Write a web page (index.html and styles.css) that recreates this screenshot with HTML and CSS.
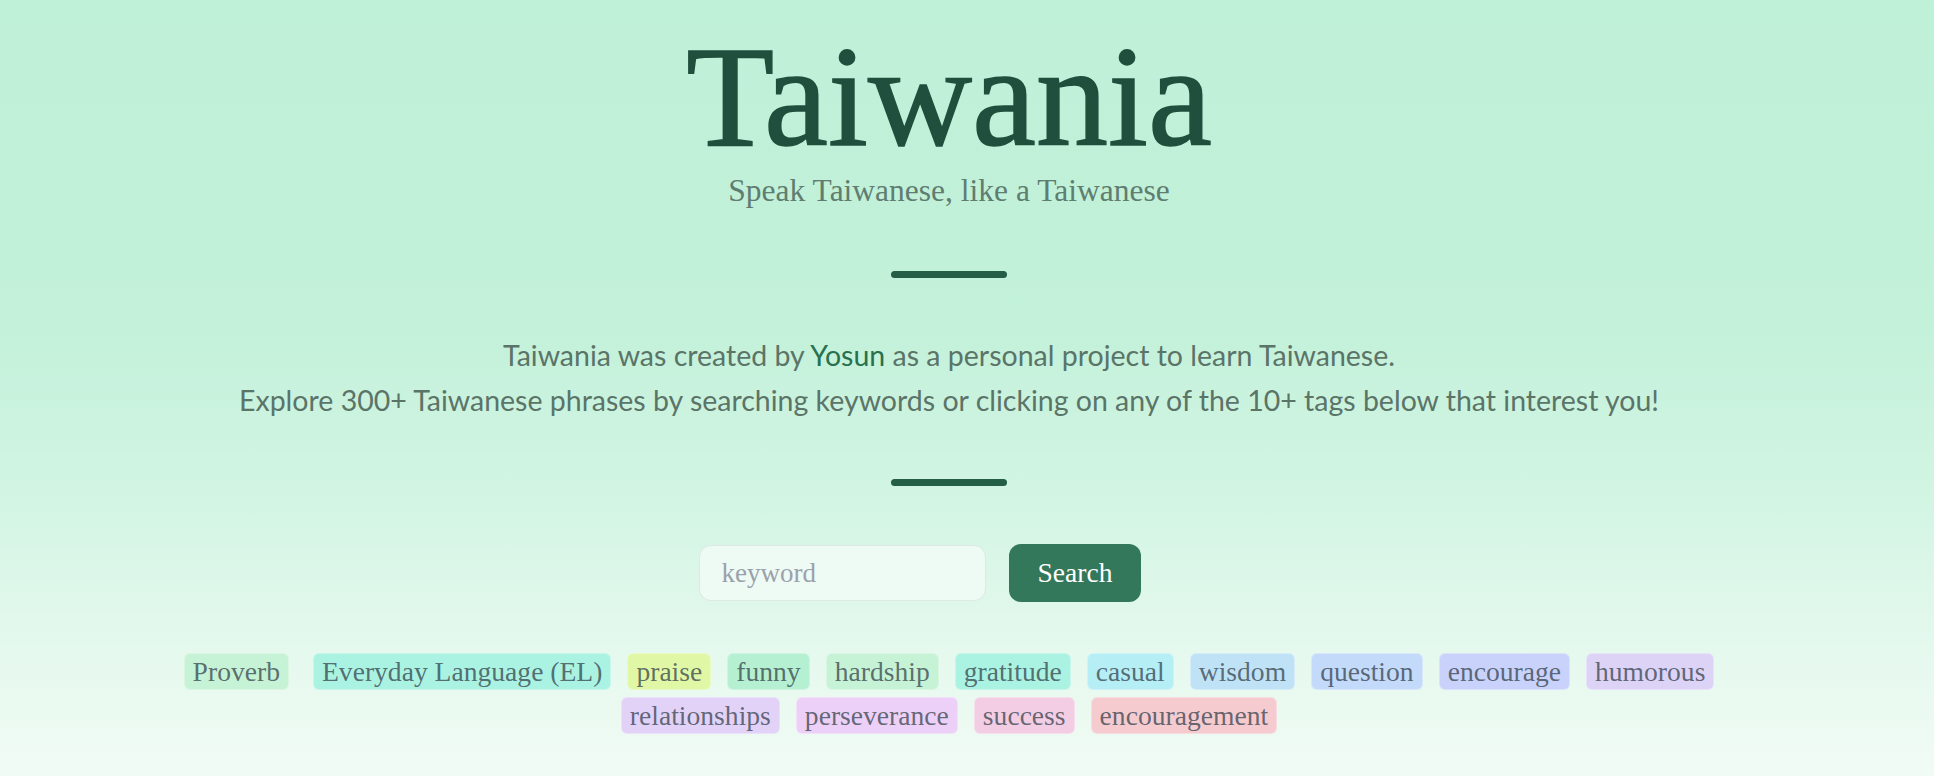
FILE: index.html
```html
<!DOCTYPE html>
<html lang="en">
<head>
<meta charset="utf-8">
<title>Taiwania</title>
<link rel="stylesheet" href="styles.css">
</head>
<body>
<main class="page">
  <h1 class="title">Taiwania</h1>
  <p class="subtitle">Speak Taiwanese, like a Taiwanese</p>
  <div class="divider divider-top"></div>
  <p class="intro">Taiwania was created by <a class="author" href="#">Yosun</a> as a personal project to learn Taiwanese.<br>Explore 300+ Taiwanese phrases by searching keywords or clicking on any of the 10+ tags below that interest you!</p>
  <div class="divider divider-bottom"></div>
  <form class="search">
    <input class="search-input" type="text" placeholder="keyword">
    <button class="search-btn" type="button">Search</button>
  </form>
  <div class="tags">
    <span class="tag tag-proverb">Proverb</span>
    <span class="tag tag-el">Everyday Language (EL)</span>
    <span class="tag tag-praise">praise</span>
    <span class="tag tag-funny">funny</span>
    <span class="tag tag-hardship">hardship</span>
    <span class="tag tag-gratitude">gratitude</span>
    <span class="tag tag-casual">casual</span>
    <span class="tag tag-wisdom">wisdom</span>
    <span class="tag tag-question">question</span>
    <span class="tag tag-encourage">encourage</span>
    <span class="tag tag-humorous">humorous</span>
    <span class="tag tag-relationships">relationships</span>
    <span class="tag tag-perseverance">perseverance</span>
    <span class="tag tag-success">success</span>
    <span class="tag tag-encouragement">encouragement</span>
  </div>
</main>
</body>
</html>
```

FILE: styles.css
```css
* { box-sizing: border-box; }

html, body {
  margin: 0;
  padding: 0;
}

body {
  min-height: 100vh;
  background: linear-gradient(to bottom, #bff0d8 0%, #c3f1da 42%, #d3f5e4 65%, #e6f9ee 85%, #f1fbf5 100%);
  font-family: "Lato", "Liberation Sans", sans-serif;
}

.page {
  display: flex;
  flex-direction: column;
  align-items: center;
  padding: 25px 36px 40px 0;
}

.title {
  margin: 0;
  font-family: "Liberation Serif", serif;
  font-weight: 400;
  font-size: 144px;
  line-height: 144px;
  color: #214f3d;
  -webkit-text-stroke: 1.5px #214f3d;
}

.subtitle {
  margin: 2px 0 0;
  font-family: "Liberation Serif", serif;
  font-size: 31.5px;
  line-height: 40px;
  color: #5f7d70;
}

.divider {
  width: 116px;
  height: 7px;
  border-radius: 4px;
  background: #245e47;
}

.divider-top { margin-top: 60px; }
.divider-bottom { margin-top: 56px; }

.intro {
  margin: 55px 0 0;
  text-align: center;
  font-size: 28.5px;
  line-height: 45px;
  color: #5b7468;
}

.author {
  color: #27714f;
  text-decoration: none;
}

.search {
  margin-top: 58px;
  display: flex;
  align-items: center;
  gap: 23px;
  padding-right: 58px;
}

.search-input {
  width: 287px;
  height: 56px;
  padding: 0 0 0 22px;
  border: 1px solid #dde9e4;
  border-radius: 12px;
  background: #eefaf4;
  font-family: "Liberation Serif", serif;
  font-size: 27px;
  color: #374151;
  outline: none;
}

.search-input::placeholder {
  color: #9aa1ab;
}

.search-btn {
  height: 58px;
  padding: 0 29px;
  border: none;
  border-radius: 12px;
  background: #33785a;
  color: #ffffff;
  font-family: "Liberation Serif", serif;
  font-size: 27.5px;
}

.tags {
  margin-top: 51px;
  display: flex;
  flex-wrap: wrap;
  justify-content: center;
  column-gap: 16px;
  row-gap: 7px;
  max-width: 1560px;
}

.tag {
  height: 37px;
  padding: 0 8px;
  border: 1px solid rgba(255, 255, 255, 0.35);
  border-radius: 6px;
  font-family: "Liberation Serif", serif;
  font-size: 27.6px;
  line-height: 35px;
  color: rgba(50, 62, 72, 0.74);
}

.tag-proverb { background: #c6f2d5; margin-right: 8px; }
.tag-el { background: #aaf2e2; }
.tag-praise { background: #e0f8a6; }
.tag-funny { background: #b5f0d2; }
.tag-hardship { background: #c6f2d5; }
.tag-gratitude { background: #aaf2e2; }
.tag-casual { background: #b5eef5; }
.tag-wisdom { background: #c0e2f6; }
.tag-question { background: #c3dafa; }
.tag-encourage { background: #c9d2fa; }
.tag-humorous { background: #dcd3f7; }
.tag-relationships { background: #e2d2f7; }
.tag-perseverance { background: #edd0f7; }
.tag-success { background: #f2cde4; }
.tag-encouragement { background: #f5cbd0; }
```
